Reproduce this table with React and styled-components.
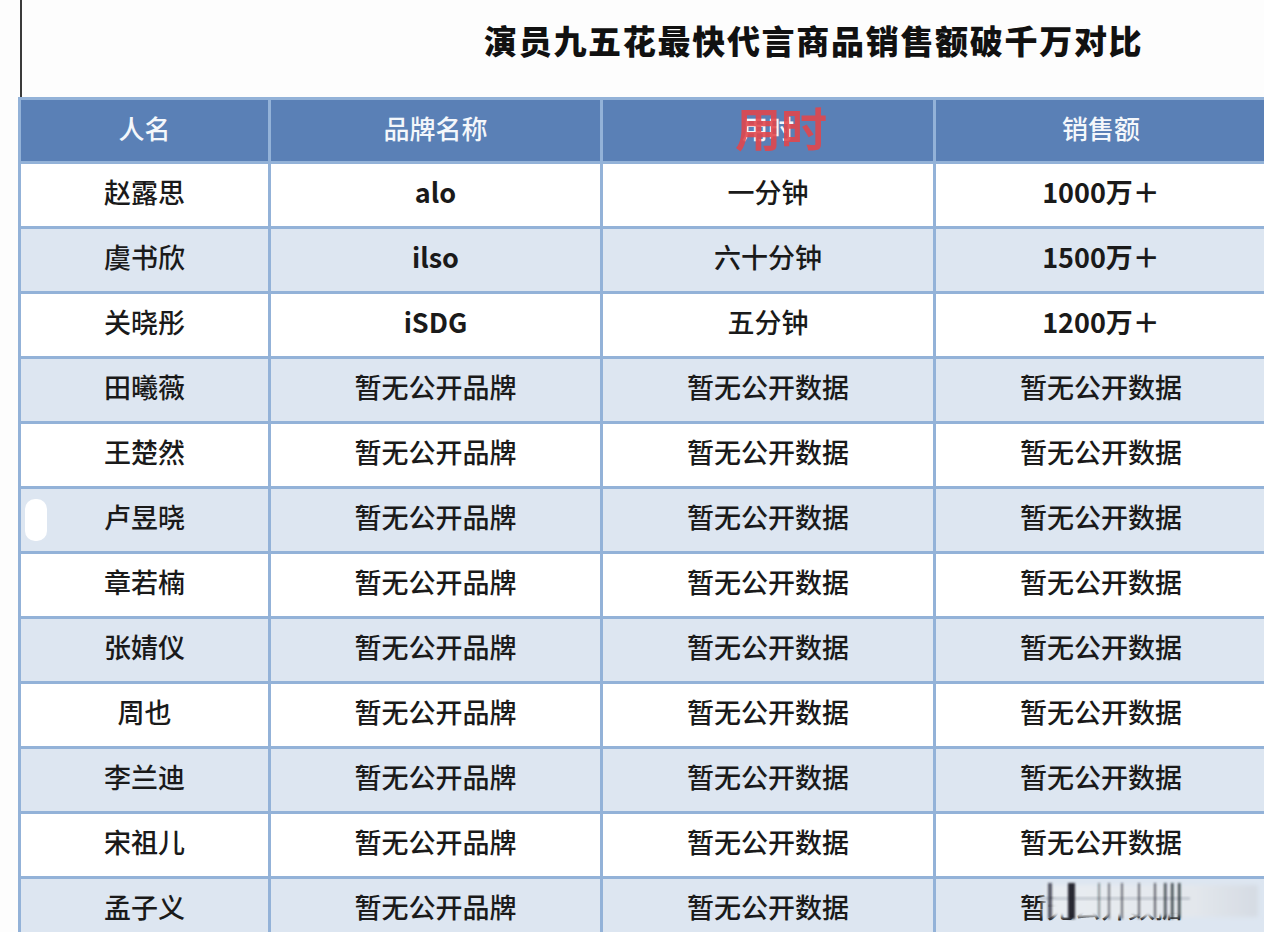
import React from "react";
import styled, { createGlobalStyle } from "styled-components";

const Global = createGlobalStyle`
  html, body { margin: 0; padding: 0; background: #ffffff; overflow: hidden; }
  body { font-family: "Noto Sans CJK SC", "Noto Sans", sans-serif; color: #1b1b1b; }
`;

const Page = styled.div`
  width: 1264px;
  height: 932px;
  overflow: hidden;
  background: #fdfdfd;
`;

const TitleBar = styled.div`
  height: 97px;
  margin-left: 20px;
  border-left: 2px solid #3a3a3a;
  display: flex;
  align-items: flex-start;
  padding-left: 462px;
  box-sizing: border-box;
`;

const Title = styled.h1`
  margin: 16px 0 0;
  font-size: 33px;
  line-height: 48px;
  font-weight: 900;
  letter-spacing: 1.7px;
  color: #111;
`;

const Table = styled.div`
  margin-left: 18px;
  width: 1251px;
  display: grid;
  grid-template-columns: 247px 329px 330px 330px;
  grid-auto-rows: 62px;
  grid-template-rows: 61px;
  gap: 3px;
  padding: 3px;
  background: #93b2d8;
  box-sizing: border-box;
`;

const HeadCell = styled.div`
  background: #5a80b6;
  color: #f4f7fb;
  font-size: 26px;
  font-weight: 500;
  display: flex;
  align-items: center;
  justify-content: center;
  padding-bottom: 7px;
  box-sizing: border-box;
  position: relative;
`;

const Stamp = styled.span`
  position: absolute;
  left: 132px;
  top: 1px;
  font-size: 46px;
  font-weight: 700;
  line-height: 50px;
  color: #e4454a;
  opacity: 0.88;
`;

const Cell = styled.div`
  background: ${(p) => (p.$alt ? "#dde6f1" : "#ffffff")};
  font-size: 27px;
  font-weight: ${(p) => (p.$bold ? 700 : 500)};
  display: flex;
  align-items: center;
  justify-content: center;
  padding-bottom: 8px;
  box-sizing: border-box;
  position: relative;
  color: #1a1a1a;
`;

const Pill = styled.span`
  position: absolute;
  left: 4px;
  top: 10px;
  width: 22px;
  height: 42px;
  border-radius: 10px;
  background: #ffffff;
  filter: blur(0.6px);
`;

const Watermark = styled.svg`
  position: absolute;
  left: 104px;
  top: 0px;
  width: 226px;
  height: 44px;
`;

const bars = [
  [8, 4, 0.7], [28, 7, 0.95], [58, 2, 0.45], [68, 2, 0.55], [81, 2, 0.6],
  [98, 2, 0.6], [114, 2, 0.65], [124, 2.5, 0.75], [131, 2.5, 0.8], [138, 2.5, 0.8],
];

function Mark() {
  return (
    <Watermark viewBox="0 0 226 44">
      <defs>
        <filter id="bl" x="-20%" y="-20%" width="140%" height="140%">
          <feGaussianBlur stdDeviation="1.1" />
        </filter>
        <filter id="bl2" x="-10%" y="-20%" width="120%" height="140%">
          <feGaussianBlur stdDeviation="2" />
        </filter>
        <linearGradient id="bg" x1="0" x2="1" y1="0" y2="0">
          <stop offset="0" stopColor="#e2e7ee" stopOpacity="0.6" />
          <stop offset="0.06" stopColor="#e8ecf1" stopOpacity="1" />
          <stop offset="0.7" stopColor="#e3e7ec" stopOpacity="1" />
          <stop offset="1" stopColor="#d5dbe3" stopOpacity="1" />
        </linearGradient>
      </defs>
      <rect x="2" y="6" width="216" height="32" fill="url(#bg)" filter="url(#bl2)" />
      <rect x="0" y="18" width="150" height="3" fill="#7b8594" opacity="0.3" filter="url(#bl)" />
      <g filter="url(#bl)">
        {bars.map(([x, w, o], i) => (
          <rect key={i} x={x} y="4" width={w} height="36" fill="#1c2028" opacity={o} />
        ))}
      </g>
    </Watermark>
  );
}

const rows = [
  ["赵露思", "alo", "一分钟", "1000万＋", true],
  ["虞书欣", "ilso", "六十分钟", "1500万＋", true],
  ["关晓彤", "iSDG", "五分钟", "1200万＋", true],
  ["田曦薇", "暂无公开品牌", "暂无公开数据", "暂无公开数据", false],
  ["王楚然", "暂无公开品牌", "暂无公开数据", "暂无公开数据", false],
  ["卢昱晓", "暂无公开品牌", "暂无公开数据", "暂无公开数据", false],
  ["章若楠", "暂无公开品牌", "暂无公开数据", "暂无公开数据", false],
  ["张婧仪", "暂无公开品牌", "暂无公开数据", "暂无公开数据", false],
  ["周也", "暂无公开品牌", "暂无公开数据", "暂无公开数据", false],
  ["李兰迪", "暂无公开品牌", "暂无公开数据", "暂无公开数据", false],
  ["宋祖儿", "暂无公开品牌", "暂无公开数据", "暂无公开数据", false],
  ["孟子义", "暂无公开品牌", "暂无公开数据", "暂无公开数据", false],
];

export default function App() {
  return (
    <Page>
      <Global />
      <TitleBar>
        <Title>演员九五花最快代言商品销售额破千万对比</Title>
      </TitleBar>
      <Table>
        <HeadCell>人名</HeadCell>
        <HeadCell>品牌名称</HeadCell>
        <HeadCell>
          用时
          <Stamp>用时</Stamp>
        </HeadCell>
        <HeadCell>销售额</HeadCell>
        {rows.map(([name, brand, time, sales, bold], i) => {
          const alt = i % 2 === 1;
          const last = i === rows.length - 1;
          return (
            <React.Fragment key={name}>
              <Cell $alt={alt}>
                {name === "卢昱晓" && <Pill />}
                {name}
              </Cell>
              <Cell $alt={alt} $bold={bold}>{brand}</Cell>
              <Cell $alt={alt}>{time}</Cell>
              <Cell $alt={alt} $bold={bold}>
                {last ? (
                  <>
                    暂无公开数据
                    <Mark />
                  </>
                ) : (
                  sales
                )}
              </Cell>
            </React.Fragment>
          );
        })}
      </Table>
    </Page>
  );
}
